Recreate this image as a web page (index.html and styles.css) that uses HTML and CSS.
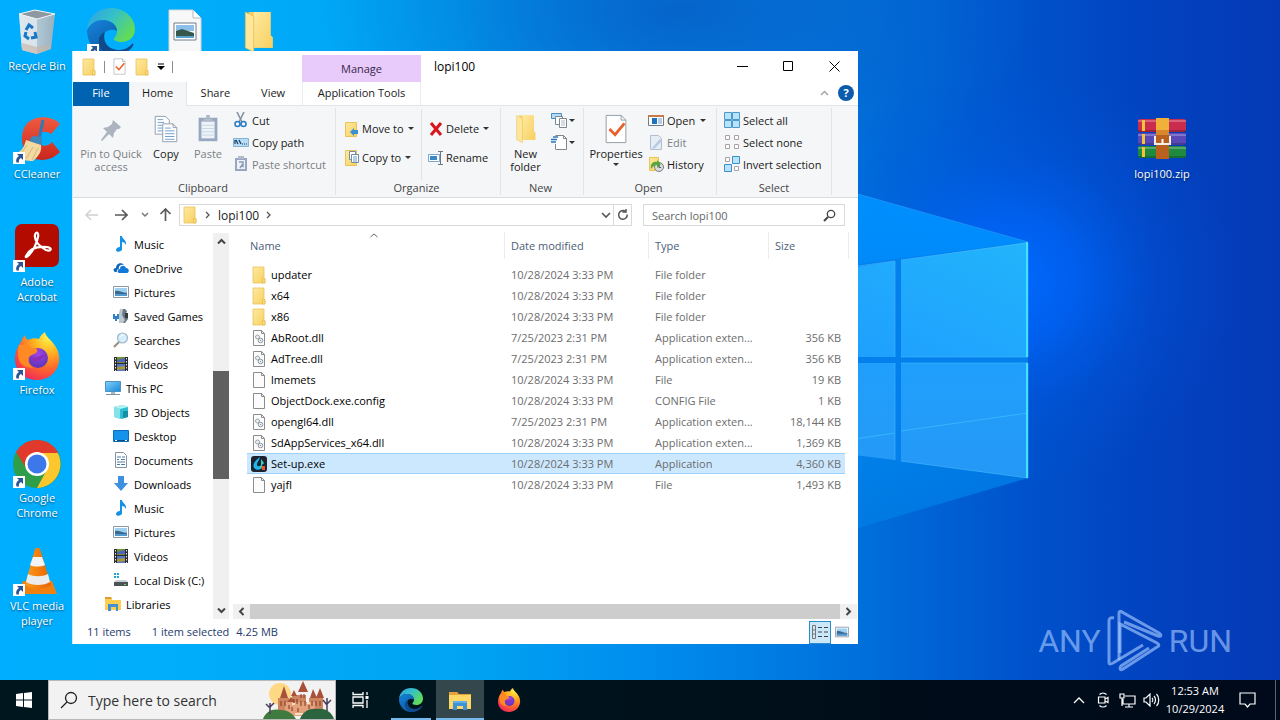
FILE: index.html
```html
<!DOCTYPE html>
<html lang="en">
<head>
<meta charset="utf-8">
<meta name="viewport" content="width=device-width, initial-scale=1">
<title>lopi100</title>
<link rel="stylesheet" href="styles.css">
</head>
<body>
<svg class="sprite" aria-hidden="true">
  <defs>
    <linearGradient id="gFold" x1="0" y1="0" x2="1" y2="1"><stop offset="0" stop-color="#ffeaa0"/><stop offset="1" stop-color="#f7cf5f"/></linearGradient>
    <linearGradient id="gEdge1" x1="0" y1="0" x2="1" y2=".6"><stop offset="0" stop-color="#2a9fe8"/><stop offset=".5" stop-color="#35c1c8"/><stop offset="1" stop-color="#62dc55"/></linearGradient>
    <linearGradient id="gEdge2" x1="0" y1="0" x2=".6" y2="1"><stop offset="0" stop-color="#1584dc"/><stop offset="1" stop-color="#0c59a4"/></linearGradient>
    <radialGradient id="gFox" cx=".75" cy=".1" r="1"><stop offset="0" stop-color="#fff44f"/><stop offset=".35" stop-color="#ffb01f"/><stop offset=".65" stop-color="#ff6a2a"/><stop offset="1" stop-color="#f0265c"/></radialGradient>
    <radialGradient id="gGlobe" cx=".5" cy=".3" r=".7"><stop offset="0" stop-color="#a044e8"/><stop offset="1" stop-color="#5b35b5"/></radialGradient>
    <linearGradient id="gCone" x1="0" x2="1"><stop offset="0" stop-color="#ff9a1a"/><stop offset="1" stop-color="#e86400"/></linearGradient>
    <linearGradient id="gBin" x1="0" x2="1"><stop offset="0" stop-color="#dfe5ea"/><stop offset="1" stop-color="#a9b0b8"/></linearGradient>
    <linearGradient id="gScreen" x1="0" y1="0" x2="1" y2="1"><stop offset="0" stop-color="#7fd0fb"/><stop offset="1" stop-color="#1a88d8"/></linearGradient>
    <linearGradient id="gCC" x1="0" y1="0" x2="0" y2="1"><stop offset="0" stop-color="#f05a40"/><stop offset="1" stop-color="#c9261c"/></linearGradient>
  </defs>
  <symbol id="folder" viewBox="0 0 16 18"><path d="M2 1h11v11l1 1v4H2z" fill="url(#gFold)" stroke="#e9c35a" stroke-width=".8"/><path d="M11.500 12.500h2.500V17h-2.500z" fill="#fbdc7c" stroke="#e0b64c" stroke-width=".6"/></symbol>
  <symbol id="bigfolder" viewBox="0 0 28 40"><path d="M4 1h21v22l2 2v10H4z" fill="#f3cd68"/><path d="M9 1h16v22l2 2v10H9z" fill="url(#gFold)"/><path d="M1 1l8 4v34l-8-4z" fill="#ffe79a" stroke="#e5bd57" stroke-width=".7"/></symbol>
  <symbol id="shortcut" viewBox="0 0 12 12"><path d="M0 0h12v12H0z" fill="#fff"/><path d="M4 2h6v6L8 6C6 7 5.500 8.500 6 10.500H3.500C2.500 8 3.500 5.500 6 4z" fill="#2b5593"/></symbol>
  <symbol id="edge" viewBox="0 0 48 48">
    <path d="M0 22C1 9 11 0 24 0c14 0 24 10 24 21 0 8-6 13-13 13-6 0-9-2-8-4 2-2 3-4 3-7 0-6-6-11-14-11C8 12 3 16 0 22z" fill="url(#gEdge1)"/>
    <path d="M0 22c4-7 9-10 16-10 8 0 14 5 14 11-8-4-16 2-15 10 1 9 9 14 18 13-17 7-33-6-33-24z" fill="url(#gEdge2)"/>
    <path d="M18 24c-3 9 3 18 14 18 6 0 10-3 13-6 1-1 2 0 1 2-5 7-12 10-20 10-9-1-15-9-14-16 0-4 3-7 6-8z" fill="#114a8b"/>
  </symbol>
  <symbol id="firefox" viewBox="0 0 48 48">
    <path d="M8 10c1-3 2-5 4-7 0 2 1 4 3 5 4-2 8-2 11-1 1-3 3-5 6-7 1 5 5 7 8 11 5 6 7 12 6 19-2 11-11 18-22 18C11 48 2 39 2 27c0-7 3-13 6-17z" fill="url(#gFox)"/>
    <circle cx="25" cy="26" r="10" fill="url(#gGlobe)"/>
    <path d="M6 13c5-1 9 0 13 3 5 0 7 2 4 5l-6 3c-3 4-1 9 3 12-9 0-15-5-15-14 0-3 0-6 1-9z" fill="#ff8a24"/>
    <path d="M17 24c5 3 8 1 12-1 2-1 4 0 4 2-2-1-4 1-6 3-4 3-9 1-10-4z" fill="#8b2fb8"/>
  </symbol>
  <symbol id="explorer" viewBox="0 0 24 24"><path d="M1 4h8l2 2h12v5H1z" fill="#e8a33a"/><path d="M1 7h22v14H1z" fill="#ffd764"/><path d="M5 13h14v9h-4v-4H9v4H5z" fill="#3f92d6"/><path d="M5 13h14v2H5z" fill="#5fb0ea"/></symbol>
  <symbol id="doc" viewBox="0 0 16 18"><path d="M2.500 1.500h8l3 3v12h-11z" fill="#fcfcfc" stroke="#8c8c8c"/><path d="M10.500 1.500v3h3" fill="none" stroke="#8c8c8c"/></symbol>
  <symbol id="dll" viewBox="0 0 16 18"><path d="M2.500 1.500h8l3 3v12h-11z" fill="#fcfcfc" stroke="#8c8c8c"/><path d="M10.500 1.500v3h3" fill="none" stroke="#8c8c8c"/><circle cx="6.500" cy="8" r="2" fill="#eef1f3" stroke="#9aa3aa"/><circle cx="9.500" cy="11.500" r="2.300" fill="#eef1f3" stroke="#8d969d"/><circle cx="9.500" cy="11.500" r=".6" fill="#7a8288"/></symbol>
  <symbol id="setup" viewBox="0 0 16 18"><rect y="1" width="16" height="16" rx="3" fill="#1b2330"/><path fill-rule="evenodd" d="M9 2C5 5 2 8 2.500 11.500c1 4 6.500 4 8.500 1.500V9C9 12 5.500 12 6 9c.5-2 2-3 3-7z" fill="#23b4ea"/><path d="M10 4l3 4-3 3z" fill="#30d8c0"/><path d="M9 11h2v2H9z" fill="#57c06a"/><path d="M11 11h3v4h-3z" fill="#e8503a"/></symbol>
  <symbol id="music" viewBox="0 0 16 16"><path d="M7 0h2c0 3 5 4 4 9-1-2-2-3-4-3v7c0 3-6 4-6 1 0-2 2-3 4-3z" fill="#1492e6"/></symbol>
  <symbol id="onedrive" viewBox="0 0 16 16"><path d="M2 12C0 11 0 8 3 8c0-5 6-6 8-3-4-1-6 2-5 4-2 0-3 2-2 3z" fill="#0a62bd"/><path d="M6 13c-2-1-2-4 1-4 0-4 5-4 6-1 3 0 4 4 1 5z" fill="#1279d8"/></symbol>
  <symbol id="pictures" viewBox="0 0 16 16"><path d="M.5 2.500h15v11H.5z" fill="#fff" stroke="#8a97a5"/><path d="M2 4h12v8H2z" fill="#9ed0f2"/><path d="M2 7c4-1 7 2 12 2v3H2z" fill="#3d6890"/><path d="M2 10h12v2H2z" fill="#4f9ad0"/></symbol>
  <symbol id="games" viewBox="0 0 16 16"><path d="M7 1h5l2 2-1 3 2 1v4l-3 4H7V8z" fill="#6d7780"/><path d="M7 1h3L9 7l3 5-2 3H6V5z" fill="#b9c6cf"/><path d="M12 5h3v5h-3z" fill="#333a40"/><path d="M0 6h2v2h2V6h2v5H4v2H2v-2H0z" fill="#2f81c8"/></symbol>
  <symbol id="search" viewBox="0 0 16 16"><path d="M6 10l-5 5" stroke="#9b8f86" stroke-width="2.200"/><circle cx="9.500" cy="6" r="5" fill="#d5eefc" stroke="#9db7ca" stroke-width="1.200"/><path d="M7 5c1-2 3-2 4-2" stroke="#fff" fill="none"/></symbol>
  <symbol id="videos" viewBox="0 0 16 16"><path d="M1 1h14v14H1z" fill="#2a2a30"/><path d="M4 1h8v6H4z" fill="#6f8f3a"/><path d="M4 4l8-2v4H4z" fill="#5065b8"/><path d="M4 8h8v7H4z" fill="#5a78c8"/><path d="M4 11l8-1v3l-8 1z" fill="#a8983a"/><path d="M2.500 2v13M13.500 2v13" stroke="#e8e8e8" stroke-dasharray="1.500 1.500"/></symbol>
  <symbol id="pc" viewBox="0 0 16 16"><path d="M.5 1.500h15v10H.5z" fill="url(#gScreen)" stroke="#4b93c4"/><path d="M6 12h4v2H6z" fill="#9fb6c6"/><path d="M1 14h14v1H1z" fill="#7d95a5"/></symbol>
  <symbol id="cube" viewBox="0 0 16 16"><path d="M1 3l8-2 6 2v10l-6 2-8-2z" fill="#2dbfd0"/><path d="M1 3l6 2v10l-6-2z" fill="#84e3ea"/><path d="M1 3l8-2 6 2-8 2z" fill="#b4f1f3"/><path d="M10 7h5v6l-5 1z" fill="#168fa5"/></symbol>
  <symbol id="desk" viewBox="0 0 16 16"><path d="M.5 2.500h15v11H.5z" fill="#1593ea" stroke="#0d6cb8"/><path d="M1 12h14v1H1z" fill="#0a4f8c"/><path d="M2 12h2v1H2zM12 12h2v1h-2z" fill="#fff"/></symbol>
  <symbol id="docs" viewBox="0 0 16 16"><path d="M2.500.5h8l3 3v12h-11z" fill="#fff" stroke="#8593a0"/><path d="M4 5h4M9 5h3M4 7.500h2M8 7.500h4M4 10h8M4 12.500h3M8 12.500h4" stroke="#4c7ca8"/></symbol>
  <symbol id="down" viewBox="0 0 16 16"><path d="M5 0h6v7h4l-7 8-7-8h4z" fill="#3d8fe0"/></symbol>
  <symbol id="disk" viewBox="0 0 16 16"><path d="M1 1h2v2H1zM4 1h2v2H4zM1 4h2v2H1zM4 4h2v2H4z" fill="#1ba8e0"/><path d="M3 8h10l2 2H1z" fill="#c9d0d4"/><path d="M1 10h14v4H1z" fill="#4c5358"/><path d="M11 12h2v1h-2z" fill="#57e36c"/></symbol>
  <symbol id="lib" viewBox="0 0 16 16"><path d="M0 2h6l1 2h9v10H0z" fill="#ffcf50"/><path d="M0 1h6l1 2H0z" fill="#e09a2c"/><path d="M3 8h10v7h-2v-4H6v4H3z" fill="#3f92d6"/></symbol>
  <symbol id="check" viewBox="0 0 28 32"><path d="M3.500 1.500h16l5 5v24h-21z" fill="#fff" stroke="#8f9aa3"/><path d="M19.500 1.500v5h5" fill="none" stroke="#8f9aa3"/><path d="M7 16l6 6 10-12" fill="none" stroke="#e8612c" stroke-width="3"/></symbol>
  <symbol id="copy" viewBox="0 0 28 32"><g fill="#fff" stroke="#8f9bab"><path d="M2.500 2.500h11l4 4v15h-15z"/><path d="M10.500 10.500h11l4 4v15h-15z"/><path d="M21.500 10.500v4h4" fill="none"/></g><path d="M5 6h6M5 9h7M5 12h5M5 15h5M5 18h5M13 15h6M13 18h10M13 21h10M13 24h10M13 27h10" stroke="#6b9ccb"/></symbol>
  <symbol id="paste" viewBox="0 0 28 32"><path d="M4 4h20v25H4z" fill="#8d9fbb"/><path d="M7 8h14v18H7z" fill="#eef3f8"/><path d="M9 5h3V1h4v4h3v3H9z" fill="#a9b4c4"/><path d="M7 12h14M7 15.500h14M7 19h14M7 22.500h14" stroke="#c3d1e0"/></symbol>
  <symbol id="pin" viewBox="0 0 24 24"><path d="M14 2l8 7-2 2-2 0-3 4-1 5-4-4-7 7-1-1 6-8-4-4 5-1 4-3z" fill="#a3adb9"/></symbol>
  <symbol id="cut" viewBox="0 0 16 16"><path d="M4 0l5 10M11 0L6 10" stroke="#8593a0" stroke-width="1.600"/><circle cx="4.500" cy="12" r="2.500" fill="none" stroke="#2d7fc1" stroke-width="1.600"/><circle cx="10.500" cy="12" r="2.500" fill="none" stroke="#2d7fc1" stroke-width="1.600"/></symbol>
  <symbol id="path" viewBox="0 0 16 16"><path d="M.5 4.500h15v8H.5z" fill="#b8dcf5" stroke="#86b2d3"/><path d="M3 6l2 4M6 6l2 4M2 6v4" stroke="#173d63" stroke-width="1.200"/><path d="M9 10h1M11 10h1M13 10h1" stroke="#173d63"/></symbol>
  <symbol id="pshort" viewBox="0 0 16 16"><path d="M2 2h12v13H2z" fill="#8d9fbb"/><path d="M4 4h8v9H4z" fill="#eef2f7"/><path d="M5 0h6v3H5z" fill="#a9b4c4"/><path d="M6 6h4v4L9 9l-2 3" fill="none" stroke="#8093b0" stroke-width="1.500"/></symbol>
  <symbol id="move" viewBox="0 0 16 18"><path d="M1.500 2.500h11v14h-11z" fill="url(#gFold)" stroke="#e9c35a"/><path d="M6 12l4-4v2h4v4h-4v2z" fill="#3b8fd0"/></symbol>
  <symbol id="copyto" viewBox="0 0 16 18"><path d="M1.500 1.500h11v15h-11z" fill="url(#gFold)" stroke="#e9c35a"/><path d="M5.500 2.500h6v8h-6z" fill="#fff" stroke="#6e8cab"/><path d="M7.500 5.500h7v8h-7z" fill="#fff" stroke="#6e8cab"/><path d="M9 8h4M9 10h4M9 12h4" stroke="#6b9ccb"/></symbol>
  <symbol id="del" viewBox="0 0 16 16"><path d="M3 2l10 12M13 2L3 14" stroke="#d8141c" stroke-width="3"/></symbol>
  <symbol id="rename" viewBox="0 0 16 16"><path d="M.5 4.500h11v7H.5z" fill="#fff" stroke="#7da7cc"/><path d="M2 6h7v4H2z" fill="#3b87c8"/><path d="M12.500 2v12M10 1.500h5M10 14.500h5" stroke="#6e7780"/></symbol>
  <symbol id="newitem" viewBox="0 0 18 16"><path d="M1.500 1.500h10v5h-10z" fill="#b8dcf5" stroke="#4a8cc0"/><path d="M5.500 4.500h7v8h-7z" fill="#fff" stroke="#7d8790"/><path d="M9.500 6.500h7v9h-7z" fill="#fff" stroke="#7d8790"/><path d="M11 9h4M11 11h4M11 13h4" stroke="#b2bac1"/></symbol>
  <symbol id="easy" viewBox="0 0 18 16"><path d="M5.500 1.500h8l3 3v11h-11" fill="#fff" stroke="#7d8790"/><path d="M13.500 1.500v3h3M5.500 10v5" fill="none" stroke="#7d8790"/><path d="M3 3h5M1 5.500h6M1 8h5" stroke="#2b78bd" stroke-width="1.300"/></symbol>
  <symbol id="open" viewBox="0 0 16 16"><path d="M.5 3.500h15v10H.5z" fill="#fff" stroke="#6c7c8b"/><path d="M0 3h16v2H0z" fill="#c9794a"/><path d="M4 6h5v6H4z" fill="#1d74bd"/><path d="M10 7h4M10 9h4M10 11h4" stroke="#6b9ccb"/></symbol>
  <symbol id="edit" viewBox="0 0 16 16"><path d="M2.500 1.500h8l3 3v11h-11z" fill="#e4edf7" stroke="#a9b9cb"/><path d="M4 14l8-9 2 2-8 8z" fill="#b4c5d8"/></symbol>
  <symbol id="history" viewBox="0 0 16 16"><path d="M1.500 1.500h9v13h-9z" fill="url(#gFold)" stroke="#e9c35a"/><circle cx="11" cy="11" r="4.500" fill="#d8dcdf" stroke="#777f86"/><path d="M3 13c-1-5 2-8 6-7v-2l4 4-4 4V9c-2 0-4 1-6 4z" fill="#55a83c"/><path d="M11 9v2.500h2" fill="none" stroke="#555"/></symbol>
  <symbol id="selall" viewBox="0 0 16 16"><path d="M.5.5h7v7h-7zM8.500.5h7v7h-7zM.5 8.500h7v7h-7zM8.500 8.500h7v7h-7z" fill="#b9e2fb" stroke="#4a9ad0"/></symbol>
  <symbol id="selnone" viewBox="0 0 16 16"><path d="M1.500 1.500h4v4h-4zM10.500 1.500h4v4h-4zM1.500 10.500h4v4h-4zM10.500 10.500h4v4h-4z" fill="#fff" stroke="#a9a2a0"/></symbol>
  <symbol id="selinv" viewBox="0 0 16 16"><path d="M1.500 1.500h4v4h-4zM10.500 10.500h4v4h-4z" fill="#fff" stroke="#a9a2a0"/><path d="M8.500.5h7v7h-7zM.5 8.500h7v7h-7z" fill="#b9e2fb" stroke="#3d8fc9"/></symbol>
</svg>

<main class="desktop">
  <svg class="wallpaper" viewBox="0 0 1280 720" preserveAspectRatio="xMidYMid slice" aria-hidden="true">
    <defs>
      <linearGradient id="wBase"><stop offset="0" stop-color="#00aeff"/><stop offset=".12" stop-color="#00aefc"/><stop offset=".36" stop-color="#00a4f3"/><stop offset=".5" stop-color="#008eee"/><stop offset=".67" stop-color="#0070db"/><stop offset=".8" stop-color="#0052cc"/><stop offset=".9" stop-color="#0242bf"/><stop offset="1" stop-color="#053ab6"/></linearGradient>
      <radialGradient id="wTop"><stop offset="0" stop-color="#0664cb"/><stop offset="1" stop-color="#0664cb" stop-opacity="0"/></radialGradient>
      <radialGradient id="wGlow"><stop offset="0" stop-color="#006aff"/><stop offset=".3" stop-color="#0064f8" stop-opacity=".75"/><stop offset=".6" stop-color="#005ae4" stop-opacity=".35"/><stop offset="1" stop-color="#0052d8" stop-opacity="0"/></radialGradient>
      <linearGradient id="wPane" x1="0" x2="1" y1="1" y2="0"><stop offset="0" stop-color="#1e9cff"/><stop offset="1" stop-color="#22b4fb"/></linearGradient>
      <linearGradient id="wPane2" x1="0" y1="0" x2="0" y2="1"><stop offset="0" stop-color="#209ffd"/><stop offset="1" stop-color="#2598f5"/></linearGradient>
      <linearGradient id="wBeam" x1="0" x2="0" y1="0" y2="1"><stop offset=".2" stop-color="#0090ff" stop-opacity=".95"/><stop offset=".7" stop-color="#0084ec" stop-opacity=".8"/><stop offset="1" stop-color="#0080e4" stop-opacity=".4"/></linearGradient>
    </defs>
    <path d="M0 0h1280v720H0z" fill="url(#wBase)"/>
    <ellipse cx="680" cy="10" rx="360" ry="180" fill="url(#wTop)"/>
    <ellipse cx="1010" cy="280" rx="230" ry="210" fill="url(#wGlow)"/>
    <path d="M600 110L858 194 1028 242V478L858 528 600 600z" fill="url(#wBeam)"/>
    <path d="M600 110L858 194 1028 242" fill="none" stroke="#35a8ff" stroke-opacity=".5"/>
    <path d="M780 274L1028 242V478L780 446z" fill="#0480ec"/>
    <path d="M780 279L895 261V357H780zM901 260L1028 242V357H901z" fill="url(#wPane)"/>
    <path d="M780 363H895V460L780 446zM901 363H1028V478L901 461z" fill="url(#wPane2)"/>
    <path d="M780 450L895 433M901 431L1028 413" stroke="#38bdff" stroke-opacity=".8"/>
    <path d="M901 260L1028 243V357M901 357H1028M901 363H1028V478L901 461M858 266L895 261V357M895 363V460" fill="none" stroke="#48b8ff" stroke-opacity=".6"/>
    <path d="M1027 242V357M1027 363V478" stroke="#3fe2ff" stroke-width="2"/>
  </svg>

  <div class="shortcuts">
    <div class="item"><span class="pic"><svg width="40" height="46" viewBox="0 0 40 46"><path d="M2 5l16-4 20 4-4 35-14 5L5 41z" fill="url(#gBin)" fill-opacity=".9"/><path d="M2 5l18 5v35L5 41z" fill="#e6ebef" fill-opacity=".75"/><path d="M5 34l15 4 14-3-1 5-13 5-15-4z" fill="#c9b3a2" fill-opacity=".6"/><path d="M2 5l16-4 20 4-18 5z" fill="#8d98a1" stroke="#f2f6f8"/><g fill="none" stroke="#1878c8" stroke-width="3"><path d="M9 21l3-5 4 3"/><path d="M18 23l1 5-5 1"/><path d="M12 30l-4-3 1-4"/></g></svg></span>Recycle Bin</div>
    <div class="item"><span class="pic"><svg width="48" height="48"><use href="#edge"/></svg><svg class="link" width="12" height="12"><use href="#shortcut"/></svg></span></div>
    <div class="item"><span class="pic"><svg width="34" height="46" viewBox="0 0 34 46"><path d="M1 1h24l8 8v37H1z" fill="#f8f8f8" stroke="#d5d5d5"/><path d="M25 1v8h8" fill="#fff" stroke="#b5bcc2"/><path d="M6 14h22v17H6z" fill="#fff" stroke="#6d7c88"/><path d="M8 16h18v6H8z" fill="#8cc0ea"/><path d="M8 22l6-2 12 4v5H8z" fill="#36584b"/><path d="M8 27h18v2H8z" fill="#5ca0d0"/></svg></span></div>
    <div class="item"><span class="pic"><svg width="30" height="42"><use href="#bigfolder"/></svg></span></div>
    <div class="item row2"><span class="pic"><svg width="48" height="48" viewBox="0 0 48 48"><path d="M47 8C39-1 18-2 11 12 5 26 12 43 28 44c8 0 14-3 19-8l-8-10c-4 5-11 5-14 0-3-7 6-14 13-8z" fill="url(#gCC)"/><path d="M30 4l-4 20" stroke="#2d7ab8" stroke-width="3"/><path d="M19 20l10 1 0 8-13-3z" fill="#3d87bb"/><path d="M13 24l15 5c1 6-2 11-8 16-6 0-13-1-20-6 8-3 11-7 13-15z" fill="#f3d9a2"/><path d="M14 29l-7 10M20 31l-7 12M25 32l-6 12" stroke="#d9b678"/></svg><svg class="link" width="12" height="12"><use href="#shortcut"/></svg></span>CCleaner</div>
    <div class="item row3"><span class="pic"><svg width="48" height="48" viewBox="0 0 48 48"><rect x="2" y="0" width="44" height="43" rx="7" fill="#b30b00"/><path d="M13 32c3-7 10-10 21-9 6 1 4 5-1 3-6-3-12-9-11-15 1-4 4-3 3 2-1 6-5 14-9 18-2 2-4 3-3 1z" fill="none" stroke="#fff" stroke-width="2.200"/></svg><svg class="link" width="12" height="12"><use href="#shortcut"/></svg></span>Adobe Acrobat</div>
    <div class="item row4"><span class="pic"><svg width="48" height="48"><use href="#firefox"/></svg><svg class="link" width="12" height="12"><use href="#shortcut"/></svg></span>Firefox</div>
    <div class="item row5"><span class="pic"><svg width="48" height="48" viewBox="0 0 48 48"><circle cx="24" cy="24" r="24" fill="#2f9e4a"/><path d="M24 24L3.200 12A24 24 0 0 1 44.800 12z" fill="#e2392d"/><path d="M3.200 12L14 29.500 24 13h20.800A24 24 0 0 0 3.200 12z" fill="#e2392d"/><path d="M24 13h20.800A24 24 0 0 1 24 48L34 29.500z" fill="#fcc62d"/><circle cx="24" cy="24" r="12" fill="#fff"/><circle cx="24" cy="24" r="9.500" fill="#3c78ea"/></svg><svg class="link" width="12" height="12"><use href="#shortcut"/></svg></span>Google Chrome</div>
    <div class="item row6"><span class="pic"><svg width="48" height="48" viewBox="0 0 48 48"><path d="M10 33h29l5 13H6z" fill="#f08010"/><path d="M22 1c1-2 4-2 5 0l11 36c-7 5-19 5-26 0z" fill="url(#gCone)"/><path d="M20 9h9l3 8c-4 2-11 2-15 0z" fill="#f4f4f4"/><path d="M15 26c6 3 14 3 20 0l2 8c-6 4-18 4-24 0z" fill="#ececec"/></svg><svg class="link" width="12" height="12"><use href="#shortcut"/></svg></span>VLC media player</div>
    <div class="item zip"><span class="pic"><svg width="48" height="44" viewBox="0 0 48 44"><rect y="1" width="48" height="13" rx="2" fill="#c92c4c"/><rect y="15" width="48" height="12" rx="2" fill="#5949b8"/><rect y="28" width="48" height="12" rx="2" fill="#1f8a3f"/><path d="M0 3h48M0 17h48M0 30h48" stroke="#fff" stroke-opacity=".25" stroke-width="2"/><path d="M0 13h48M0 26h48M0 39h48" stroke="#000" stroke-opacity=".2" stroke-width="2"/><path d="M4 2h3v11H4zM4 16h3v10H4zM4 29h3v10H4z" fill="#f2c23c"/><path d="M18 0h13v41H18z" fill="#b9601f"/><path d="M18 0h13v13H18z" fill="#f0b13a"/><path d="M18 12h13v5H18z" fill="#d8872b"/><path d="M17 18v8h15v-8" fill="none" stroke="#f2efe8" stroke-width="2"/><path d="M24.500 21v5" stroke="#fff" stroke-width="2"/></svg></span>lopi100.zip</div>
  </div>

  <div class="watermark"><span>ANY</span><svg width="56" height="62" viewBox="0 0 56 62" fill="none" stroke="currentColor" stroke-width="3"><path d="M12 50V3c0-2 2-2 3-1l37 21c3 2 2 4-1 3L17 12"/><path d="M7 8c-4-1-5 1-5 3v41c0 3 2 2 4 1l30-18"/><path d="M13 43V14l37 19c3 2 2 3 0 4L16 59c-3 2-4-1-2-3l28-18"/></svg><span>RUN</span></div>

  <section class="window" aria-label="lopi100">
    <header class="head">
      <div class="head-left">
        <div class="quick">
          <svg width="16" height="18"><use href="#folder"/></svg><i class="bar"></i>
          <button class="ico" aria-label="Properties"><svg width="15" height="17"><use href="#check"/></svg></button>
          <button class="ico" aria-label="New folder"><svg width="16" height="18"><use href="#folder"/></svg></button>
          <button class="ico" aria-label="Customize"><svg width="8" height="8" viewBox="0 0 8 8"><path d="M1 1h6" stroke="#000"/><path d="M0 3h8L4 7z"/></svg></button><i class="bar"></i>
        </div>
        <nav class="tabs"><button class="tab file">File</button><button class="tab active">Home</button><button class="tab">Share</button><button class="tab">View</button></nav>
      </div>
      <div class="context"><div class="manage">Manage</div><button class="tab">Application Tools</button></div>
      <div class="head-right">
        <div class="title"><h1>lopi100</h1>
          <button class="win" aria-label="Minimize"><svg width="11" height="11" viewBox="0 0 11 11"><path d="M0 5.500h11" stroke="#000"/></svg></button>
          <button class="win" aria-label="Maximize"><svg width="11" height="11" viewBox="0 0 11 11"><path d="M.5.5h9v9h-9z" fill="none" stroke="#000"/></svg></button>
          <button class="win" aria-label="Close"><svg width="11" height="11" viewBox="0 0 11 11"><path d="M.5.5l10 10M10.500.5l-10 10" stroke="#000"/></svg></button>
        </div>
        <div class="helps"><button class="ico" aria-label="Collapse ribbon"><svg width="9" height="6" viewBox="0 0 9 6"><path d="M1 5l3.500-3.500L8 5" fill="none" stroke="#a5a5a5" stroke-width="1.500"/></svg></button><button class="help" aria-label="Help">?</button></div>
      </div>
    </header>

    <div class="ribbon">
      <section class="group clip"><div class="tools">
        <button class="big pinb dim"><svg width="24" height="30" viewBox="0 0 24 26"><use href="#pin" width="24" height="24" y="2"/></svg>Pin to Quick access</button>
        <button class="big"><svg width="28" height="30"><use href="#copy"/></svg>Copy</button>
        <button class="big dim"><svg width="28" height="30"><use href="#paste"/></svg>Paste</button>
        <div class="stack"><button><svg width="16" height="16"><use href="#cut"/></svg>Cut</button><button><svg width="16" height="16"><use href="#path"/></svg>Copy path</button><button class="dim"><svg width="16" height="16"><use href="#pshort"/></svg>Paste shortcut</button></div>
      </div><h2>Clipboard</h2></section>
      <section class="group org"><div class="tools">
        <div class="stack loose"><button><svg width="16" height="18"><use href="#move"/></svg>Move to<i class="caret"></i></button><button><svg width="16" height="18"><use href="#copyto"/></svg>Copy to<i class="caret"></i></button></div>
        <div class="stack loose second"><button><svg width="16" height="16"><use href="#del"/></svg>Delete<i class="caret"></i></button><button><svg width="16" height="16"><use href="#rename"/></svg>Rename</button></div>
      </div><h2>Organize</h2></section>
      <section class="group new"><div class="tools">
        <button class="big"><svg width="20" height="30"><use href="#bigfolder"/></svg>New folder</button>
        <div class="stack"><button aria-label="New item"><svg width="18" height="16"><use href="#newitem"/></svg><i class="caret"></i></button><button aria-label="Easy access"><svg width="18" height="16"><use href="#easy"/></svg><i class="caret"></i></button></div>
      </div><h2>New</h2></section>
      <section class="group opn"><div class="tools">
        <button class="big wide"><svg width="28" height="30"><use href="#check"/></svg>Properties<i class="caret"></i></button>
        <div class="stack"><button><svg width="16" height="16"><use href="#open"/></svg>Open<i class="caret"></i></button><button class="dim"><svg width="16" height="16"><use href="#edit"/></svg>Edit</button><button><svg width="16" height="16"><use href="#history"/></svg>History</button></div>
      </div><h2>Open</h2></section>
      <section class="group sel"><div class="tools">
        <div class="stack"><button><svg width="16" height="16"><use href="#selall"/></svg>Select all</button><button><svg width="16" height="16"><use href="#selnone"/></svg>Select none</button><button><svg width="16" height="16"><use href="#selinv"/></svg>Invert selection</button></div>
      </div><h2>Select</h2></section>
    </div>

    <div class="address">
      <button class="ico nav-b" aria-label="Back"><svg width="14" height="12" viewBox="0 0 14 12" fill="none" stroke="#d0d0d0" stroke-width="1.500"><path d="M6 1L1 6l5 5M1 6h12"/></svg></button>
      <button class="ico nav-b" aria-label="Forward"><svg width="14" height="12" viewBox="0 0 14 12" fill="none" stroke="#5a5a5a" stroke-width="1.700"><path d="M8 1l5 5-5 5M13 6H1"/></svg></button>
      <button class="ico" aria-label="Recent"><svg width="8" height="6" viewBox="0 0 8 6" fill="none" stroke="#777" stroke-width="1.500"><path d="M1 1l3 3 3-3"/></svg></button>
      <button class="ico up" aria-label="Up"><svg width="13" height="14" viewBox="0 0 13 14" fill="none" stroke="#5a5a5a" stroke-width="1.700"><path d="M1.500 6l5-5 5 5M6.500 1v12"/></svg></button>
      <div class="crumbs"><svg width="16" height="18"><use href="#folder"/></svg><svg class="gt" width="5" height="8"><path d="M1 1l3 3-3 3" fill="none" stroke="#555" stroke-width="1.300"/></svg><a href="#">lopi100</a><svg class="gt" width="5" height="8"><path d="M1 1l3 3-3 3" fill="none" stroke="#555" stroke-width="1.300"/></svg>
        <button class="ico end" aria-label="History"><svg width="10" height="7" viewBox="0 0 10 7" fill="none" stroke="#555" stroke-width="1.600"><path d="M1 1l4 4 4-4"/></svg></button><button class="ico reload" aria-label="Refresh"><svg width="12" height="12" viewBox="0 0 12 12" fill="none" stroke="#555" stroke-width="1.500"><path d="M8.500 2.500a4.300 4.300 0 1 0 1.700 3"/><path d="M5.500 3h3.500V0"/></svg></button></div>
      <label class="find"><input type="text" aria-label="Search lopi100" placeholder="Search lopi100"><svg width="13" height="13" viewBox="0 0 13 13" fill="none" stroke="#444"><circle cx="8" cy="5" r="3.700" stroke-width="1.300"/><path d="M5 8l-4 4" stroke-width="2"/></svg></label>
    </div>

    <div class="body">
      <nav class="tree">
        <a class="sub" href="#"><svg width="16" height="16"><use href="#music"/></svg>Music</a>
        <a class="sub" href="#"><svg width="16" height="16"><use href="#onedrive"/></svg>OneDrive</a>
        <a class="sub" href="#"><svg width="16" height="16"><use href="#pictures"/></svg>Pictures</a>
        <a class="sub" href="#"><svg width="16" height="16"><use href="#games"/></svg>Saved Games</a>
        <a class="sub" href="#"><svg width="16" height="16"><use href="#search"/></svg>Searches</a>
        <a class="sub" href="#"><svg width="16" height="16"><use href="#videos"/></svg>Videos</a>
        <a href="#"><svg width="16" height="16"><use href="#pc"/></svg>This PC</a>
        <a class="sub" href="#"><svg width="16" height="16"><use href="#cube"/></svg>3D Objects</a>
        <a class="sub" href="#"><svg width="16" height="16"><use href="#desk"/></svg>Desktop</a>
        <a class="sub" href="#"><svg width="16" height="16"><use href="#docs"/></svg>Documents</a>
        <a class="sub" href="#"><svg width="16" height="16"><use href="#down"/></svg>Downloads</a>
        <a class="sub" href="#"><svg width="16" height="16"><use href="#music"/></svg>Music</a>
        <a class="sub" href="#"><svg width="16" height="16"><use href="#pictures"/></svg>Pictures</a>
        <a class="sub" href="#"><svg width="16" height="16"><use href="#videos"/></svg>Videos</a>
        <a class="sub" href="#"><svg width="16" height="16"><use href="#disk"/></svg>Local Disk (C:)</a>
        <a href="#"><svg width="16" height="16"><use href="#lib"/></svg>Libraries</a>
      </nav>
      <div class="vscroll"><button class="ico" aria-label="Scroll up"><svg width="9" height="7" viewBox="0 0 9 7" fill="none" stroke="#444" stroke-width="2"><path d="M1 5.500L4.500 2 8 5.500"/></svg></button><div class="vtrack"><div class="vthumb"></div></div><button class="ico" aria-label="Scroll down"><svg width="9" height="7" viewBox="0 0 9 7" fill="none" stroke="#444" stroke-width="2"><path d="M1 1.500L4.500 5 8 1.500"/></svg></button></div>
      <div class="content">
        <table class="files">
          <colgroup><col class="c-name"><col class="c-date"><col class="c-type"><col class="c-size"></colgroup>
          <thead><tr><th>Name<svg class="sort" width="8" height="5" viewBox="0 0 8 5"><path d="M.5 4L4 1l3.500 3" fill="none" stroke="#666"/></svg></th><th>Date modified</th><th>Type</th><th>Size</th></tr></thead>
          <tbody>
            <tr><td><svg width="16" height="18"><use href="#folder"/></svg>updater</td><td>10/28/2024 3:33 PM</td><td>File folder</td><td></td></tr>
            <tr><td><svg width="16" height="18"><use href="#folder"/></svg>x64</td><td>10/28/2024 3:33 PM</td><td>File folder</td><td></td></tr>
            <tr><td><svg width="16" height="18"><use href="#folder"/></svg>x86</td><td>10/28/2024 3:33 PM</td><td>File folder</td><td></td></tr>
            <tr><td><svg width="16" height="18"><use href="#dll"/></svg>AbRoot.dll</td><td>7/25/2023 2:31 PM</td><td>Application exten...</td><td>356 KB</td></tr>
            <tr><td><svg width="16" height="18"><use href="#dll"/></svg>AdTree.dll</td><td>7/25/2023 2:31 PM</td><td>Application exten...</td><td>356 KB</td></tr>
            <tr><td><svg width="16" height="18"><use href="#doc"/></svg>lmemets</td><td>10/28/2024 3:33 PM</td><td>File</td><td>19 KB</td></tr>
            <tr><td><svg width="16" height="18"><use href="#doc"/></svg>ObjectDock.exe.config</td><td>10/28/2024 3:33 PM</td><td>CONFIG File</td><td>1 KB</td></tr>
            <tr><td><svg width="16" height="18"><use href="#dll"/></svg>opengl64.dll</td><td>7/25/2023 2:31 PM</td><td>Application exten...</td><td>18,144 KB</td></tr>
            <tr><td><svg width="16" height="18"><use href="#dll"/></svg>SdAppServices_x64.dll</td><td>10/28/2024 3:33 PM</td><td>Application exten...</td><td>1,369 KB</td></tr>
            <tr class="picked"><td><svg width="16" height="18"><use href="#setup"/></svg>Set-up.exe</td><td>10/28/2024 3:33 PM</td><td>Application</td><td>4,360 KB</td></tr>
            <tr><td><svg width="16" height="18"><use href="#doc"/></svg>yajfl</td><td>10/28/2024 3:33 PM</td><td>File</td><td>1,493 KB</td></tr>
          </tbody>
        </table>
        <div class="hscroll"><button class="ico" aria-label="Scroll left"><svg width="7" height="9" viewBox="0 0 7 9" fill="none" stroke="#444" stroke-width="2"><path d="M5.500 1L2 4.500 5.500 8"/></svg></button><div class="hthumb"></div><button class="ico" aria-label="Scroll right"><svg width="7" height="9" viewBox="0 0 7 9" fill="none" stroke="#444" stroke-width="2"><path d="M1.500 1L5 4.500 1.500 8"/></svg></button></div>
      </div>
    </div>

    <footer class="status"><span>11 items</span><span>1 item selected</span><span>4.25 MB</span>
      <div class="views"><button class="view on" aria-label="Details"><svg width="16" height="14" viewBox="0 0 16 14" fill="none"><path d="M.5.5h3v13h-3zM.5 5h3M.5 9h3" stroke="#777"/><path d="M6 2.500h4M12 2.500h4M6 7h4M12 7h4M6 11.500h4M12 11.500h4" stroke="#444"/></svg></button><button class="view" aria-label="Thumbnails"><svg width="14" height="14"><use href="#pictures"/></svg></button></div>
    </footer>
  </section>
</main>

<footer class="taskbar">
  <button class="task" aria-label="Start"><svg width="16" height="16" viewBox="0 0 16 16" fill="#fff"><path d="M0 2l7-1v6.500H0zM8 1l8-1v7.500H8zM0 8.500h7V15l-7-1zM8 8.500h8V16l-8-1z"/></svg></button>
  <label class="search"><svg width="18" height="18" viewBox="0 0 18 18" fill="none" stroke="#222" stroke-width="1.300"><circle cx="11" cy="7" r="5.500"/><path d="M7 11l-6 6"/></svg><input type="text" aria-label="Search" placeholder="Type here to search">
    <svg class="castle" width="72" height="38" viewBox="0 0 72 38"><circle cx="17" cy="13" r="11" fill="#ffd884"/><g fill="#cf8560"><path d="M15 17h11v20H15zM29 14h14v21H29zM46 17h14v16H46z"/><path d="M22 21h30v14H22z" fill="#e3a27c"/></g><g fill="#a9503a"><path d="M17 17l4-12 4 12zM28 15l3-6 3 6zM35 11l5-11 5 11zM47 17l3-9 4 9zM53 17l4-10 4 10zM24 21l4-5 4 5z"/></g><path d="M18 20v5M22 20v5M26 24v4M31 18v5M34 18v5M38 13v4M41 13v4M38 20v5M42 20v5M46 24v4M49 20v5M53 20v5M57 20v5M29 26v4M35 27v4M50 28v4" stroke="#7c3528"/><path d="M29 23h3M44 22h3M32 33h8" stroke="#f9e0bc" stroke-width="2"/><path d="M0 38c3-8 10-11 18-9 7 0 12 4 15 9z" fill="#3f7a3e"/><path d="M37 38c3-8 10-11 18-10 8-1 14 4 16 10z" fill="#2d6440"/><path d="M7 33V22M7 27l-4-4M7 26l4-4M64 30V17M64 24l-4-5M64 23l4-4" stroke="#4a3c5c" stroke-width="1.500"/></svg></label>
  <button class="task" aria-label="Task view"><svg width="18" height="16" viewBox="0 0 18 16" fill="none" stroke="#fff" stroke-width="1.300"><path d="M1 0v2.500h10V0M1 16v-2.500h10V16M1 5h10v6H1zM15 0v3M15 8v8"/><path d="M13.500 4h3v3h-3z" fill="#fff" stroke="none"/></svg></button>
  <button class="task run" aria-label="Edge"><svg width="24" height="24"><use href="#edge"/></svg></button>
  <button class="task current" aria-label="File Explorer"><svg width="24" height="24"><use href="#explorer"/></svg></button>
  <button class="task" aria-label="Firefox"><svg width="24" height="24"><use href="#firefox"/></svg></button>
  <div class="tray">
    <button aria-label="Hidden icons"><svg width="12" height="7" viewBox="0 0 12 7" fill="none" stroke="#fff" stroke-width="1.300"><path d="M1 6l5-5 5 5"/></svg></button>
    <button aria-label="Meet now"><svg width="12" height="16" viewBox="0 0 12 16" fill="none" stroke="#fff" stroke-width="1.200"><path d="M1.500 5h6.500v6H1.500zM8 7l3-1.500v5L8 9M2.500 2.500c2-2 5-2 7 0M2.500 13.500c2 2 5 2 7 0"/></svg></button>
    <button aria-label="Network"><svg width="17" height="15" viewBox="0 0 17 15" fill="none" stroke="#fff" stroke-width="1.200"><path d="M6 3h10v8H4V6M1 1h4v4H1zM3 5v8M10 11v3M6 14h8"/></svg></button>
    <button aria-label="Volume"><svg width="17" height="14" viewBox="0 0 17 14" fill="none" stroke="#fff" stroke-width="1.200"><path d="M1 5h2l4-4v12L3 9H1zM9 5c1 1 1 3 0 4M11 3c2 2 2 6 0 8M13.500 1c3 3 3 9 0 12"/></svg></button>
    <div class="clock"><time>12:53 AM</time><time>10/29/2024</time></div>
    <button class="note" aria-label="Notifications"><svg width="17" height="16" viewBox="0 0 17 16" fill="none" stroke="#fff" stroke-width="1.200"><path d="M1 1h15v11h-5l-2.500 3L6 12H1z"/></svg></button>
    <i class="peek"></i>
  </div>
</footer>
</body>
</html>
```
FILE: styles.css
```css
* { box-sizing: border-box; }
body {
  margin: 0;
  height: 100vh;
  display: flex;
  flex-direction: column;
  overflow: hidden;
  font: 11px/15px "Open Sans", "Noto Sans", sans-serif;
  color: #1a1a1a;
}
button, input { font: inherit; color: inherit; border: 0; padding: 0; background: none; }
a { color: inherit; text-decoration: none; }
h1, h2 { margin: 0; font-size: inherit; font-weight: 400; }
svg { flex: none; display: block; }
.sprite { position: absolute; width: 0; height: 0; }

.desktop { position: relative; flex: 1; min-height: 0; background: #0080e8; }
.wallpaper { position: absolute; top: 0; left: 0; width: 100vw; height: 100vh; }
.shortcuts {
  position: relative;
  display: grid;
  grid-template-columns: repeat(16, 74px);
  grid-auto-rows: 108px;
  padding-top: 8px;
}
.item { grid-row: 1; text-align: center; color: #fff; text-shadow: 0 1px 2px rgba(0, 0, 0, .6); padding: 0 4px; }
.row2 { grid-row: 2; } .row3 { grid-row: 3; } .row4 { grid-row: 4; } .row5 { grid-row: 5; } .row6 { grid-row: 6; }
.zip { grid-row: 2; grid-column: 16; margin: 0 -15px 0 15px; }
.pic { position: relative; display: grid; place-items: center; width: 48px; height: 48px; margin: 0 auto 2px; }
.link { position: absolute; left: 0; bottom: 0; }
.watermark {
  position: absolute;
  right: 48px;
  bottom: 8px;
  display: flex;
  align-items: center;
  gap: 6px;
  font: 32px/62px Roboto, "Open Sans", sans-serif;
  color: rgba(165, 200, 255, .65);
}

.window {
  position: absolute;
  left: 72px;
  top: 51px;
  width: 786px;
  display: flex;
  flex-direction: column;
  background: #fff;
  border-left: 1px solid #c5f0ff;
}
.ico { display: grid; place-items: center; }
.head { display: flex; border-bottom: 1px solid #e3e4e6; height: 55px; }
.head-left { width: 229px; }
.quick { display: flex; align-items: center; height: 31px; padding-left: 8px; gap: 7px; }
.bar { width: 1px; height: 12px; background: #8c8c8c; }
.tabs { display: flex; }
.tab { height: 24px; line-height: 22px; padding-bottom: 2px; width: 58px; white-space: nowrap; text-align: center; }
.file { width: 56px; background: #0063b1; color: #fff; }
.tab.active { background: #f5f6f7; border: 1px solid #e3e4e6; border-bottom: 0; border-top: 0; }
.context { width: 119px; padding-top: 4px; text-align: center; }
.context .tab { width: 100%; border: 1px solid #ececec; border-width: 0 1px; }
.manage { height: 27px; line-height: 28px; background: #e8cbfa; color: #38264a; }
.head-right { flex: 1; }
.title { display: flex; align-items: center; height: 31px; padding-right: 1px; }
.title h1 { flex: 1; padding-left: 13px; font-size: 12px; color: #000; }
.win { width: 46px; height: 31px; display: grid; place-items: center; }
.helps { display: flex; justify-content: flex-end; align-items: center; gap: 9px; height: 21px; padding-right: 4px; }
.help { width: 16px; height: 16px; line-height: 16px; border-radius: 8px; background: #0b5cad; color: #fff; font-weight: 700; }

.ribbon { display: flex; height: 92px; background: #f5f6f7; border-bottom: 1px solid #dadbdc; }
.group { display: flex; flex-direction: column; border-right: 1px solid #e2e3e4; margin: 2px 0; }
.group h2 { text-align: center; height: 15px; color: #444; }
.tools { flex: 1; display: flex; padding-top: 1px; }
.clip { width: 263px; padding-left: 4px; } .org { width: 165px; } .new { width: 83px; } .opn { width: 133px; } .sel { width: 115px; }
.clip h2, .org h2, .new h2, .opn h2 { padding-right: 3px; }
.clip h2 { padding-right: 6px; }
.big { width: 42px; display: flex; flex-direction: column; align-items: center; line-height: 13px; height: 68px; padding-top: 5px; gap: 3px; }
.pinb { width: 68px; }
.wide { width: 64px; }
.new .big { width: 49px; }
.dim { color: #7b7f84; }
.dim svg { opacity: .9; }
.stack { display: flex; flex-direction: column; }
.stack button { display: flex; align-items: center; gap: 3px; height: 22px; white-space: nowrap; }
.clip .stack { padding-left: 4px; }
.org .stack { width: 85px; padding: 5px 0 0 8px; }
.org .stack button { gap: 2px; }
.loose button { height: 29px; }
.org .second { width: 79px; border-left: 1px solid #e2e3e4; padding-left: 6px; }
.sel .stack { padding-left: 7px; }
.caret { border: 3px solid transparent; border-top-color: #333; border-bottom-width: 0; margin-left: 2px; }
.wide .caret { margin: 0; }
.stack button[aria-label] .caret { margin-left: -2px; }

.address { display: flex; align-items: center; height: 34px; padding: 0 13px 0 12px; }
.nav-b { margin-right: 15px; }
.nav-b + .ico:not(.nav-b) { margin-left: -2px; }
.up { margin: 0 7px 0 10px; }
.crumbs { flex: 1; display: flex; align-items: center; height: 22px; border: 1px solid #d9d9d9; padding-left: 2px; font-size: 12px; }
.gt { margin: 0 8px 0 7px; }
.end { margin-left: auto; }
.reload { width: 18px; height: 20px; border-left: 1px solid #d9d9d9; margin-left: 2px; }
.find { display: flex; align-items: center; width: 202px; height: 22px; margin-left: 11px; border: 1px solid #d9d9d9; padding: 0 8px; color: #555; }
.find input { flex: 1; min-width: 0; }
.find input::placeholder { color: #666; opacity: 1; }

.body { display: flex; height: 388px; }
.tree { width: 140px; overflow: hidden; }
.tree a { display: flex; align-items: center; gap: 5px; height: 24px; padding-left: 32px; white-space: nowrap; color: #000; }
.tree .sub { padding-left: 40px; }
.vscroll { width: 16px; display: flex; flex-direction: column; background: #f0f0f0; margin: 1px 0; }
.vscroll .ico { height: 17px; }
.vtrack { flex: 1; padding-top: 121px; }
.vthumb { height: 108px; background: #606060; }
.content { flex: 1; min-width: 0; display: flex; flex-direction: column; padding-left: 4px; }
.files { table-layout: fixed; border-collapse: separate; border-spacing: 0; width: 602px; margin-left: 14px; color: #6d6d6d; }
.c-name { width: 258px; } .c-date { width: 144px; } .c-type { width: 120px; } .c-size { width: 80px; }
.files th { position: relative; height: 27px; padding: 0 0 0 6px; text-align: left; font-weight: 400; color: #4c607a; border-right: 1px solid #ececec; }
.files th:first-child { padding-left: 3px; }
.sort { position: absolute; left: 48%; top: 1px; }
.files tbody::before { content: ""; display: block; height: 5px; }
.files td { height: 21px; padding: 0 0 0 6px; white-space: nowrap; }
.files td:first-child { display: flex; align-items: center; gap: 4px; padding-left: 4px; color: #000; }
.files td:last-child { text-align: right; padding-right: 8px; }
.picked td { background: linear-gradient(#99d1ff 1px, #cce8ff 1px, #cce8ff 20px, #99d1ff 20px) no-repeat; }
.picked td:last-child { background-size: calc(100% - 4px) 100%; }
.hscroll { display: flex; height: 15px; margin: auto 1px 1px 0; background: #f0f0f0; }
.hscroll .ico { width: 17px; }
.hthumb { flex: 1; background: #cdcdcd; }

.status { display: flex; align-items: center; height: 24px; padding-left: 14px; color: #1e3a6e; }
.status span { margin-top: -2px; }
.status span:first-child { margin-right: 21px; }
.status span + span { margin-right: 7px; }
.views { display: flex; margin-left: auto; padding-right: 5px; }
.view { display: grid; place-items: center; width: 22px; height: 23px; }
.on { border: 1px solid #2a8dcb; background: #cbe8f8; }

.taskbar { position: relative; display: flex; height: 40px; background: linear-gradient(90deg, #00161e, #00161e 30%, #000d19 70%, #000a1a); color: #fff; }
.task { width: 49px; display: grid; place-items: center; }
.task:first-child { width: 48px; }
.search { display: flex; align-items: center; width: 288px; background: #f2f2f2; border: 1px solid #b8b8b8; padding-left: 11px; gap: 10px; color: #222; font-size: 14px; }
.search input { flex: 1; min-width: 0; height: 24px; }
.search input::placeholder { color: #333; opacity: 1; }
.run { background: linear-gradient(#76b9ed, #76b9ed) center bottom / 40px 2px no-repeat; width: 51px; }
.current { width: 48px; background: linear-gradient(#76b9ed, #76b9ed) center bottom / 100% 2px no-repeat #34474d; }
.tray { display: flex; align-items: center; margin-left: auto; }
.tray button { width: 24px; height: 40px; display: grid; place-items: center; }
.clock { width: 64px; text-align: center; line-height: 18px; }
.clock time { display: block; }
.tray .note { width: 40px; }
.peek { width: 5px; height: 40px; border-left: 1px solid #5a6470; margin-left: 8px; }
```
